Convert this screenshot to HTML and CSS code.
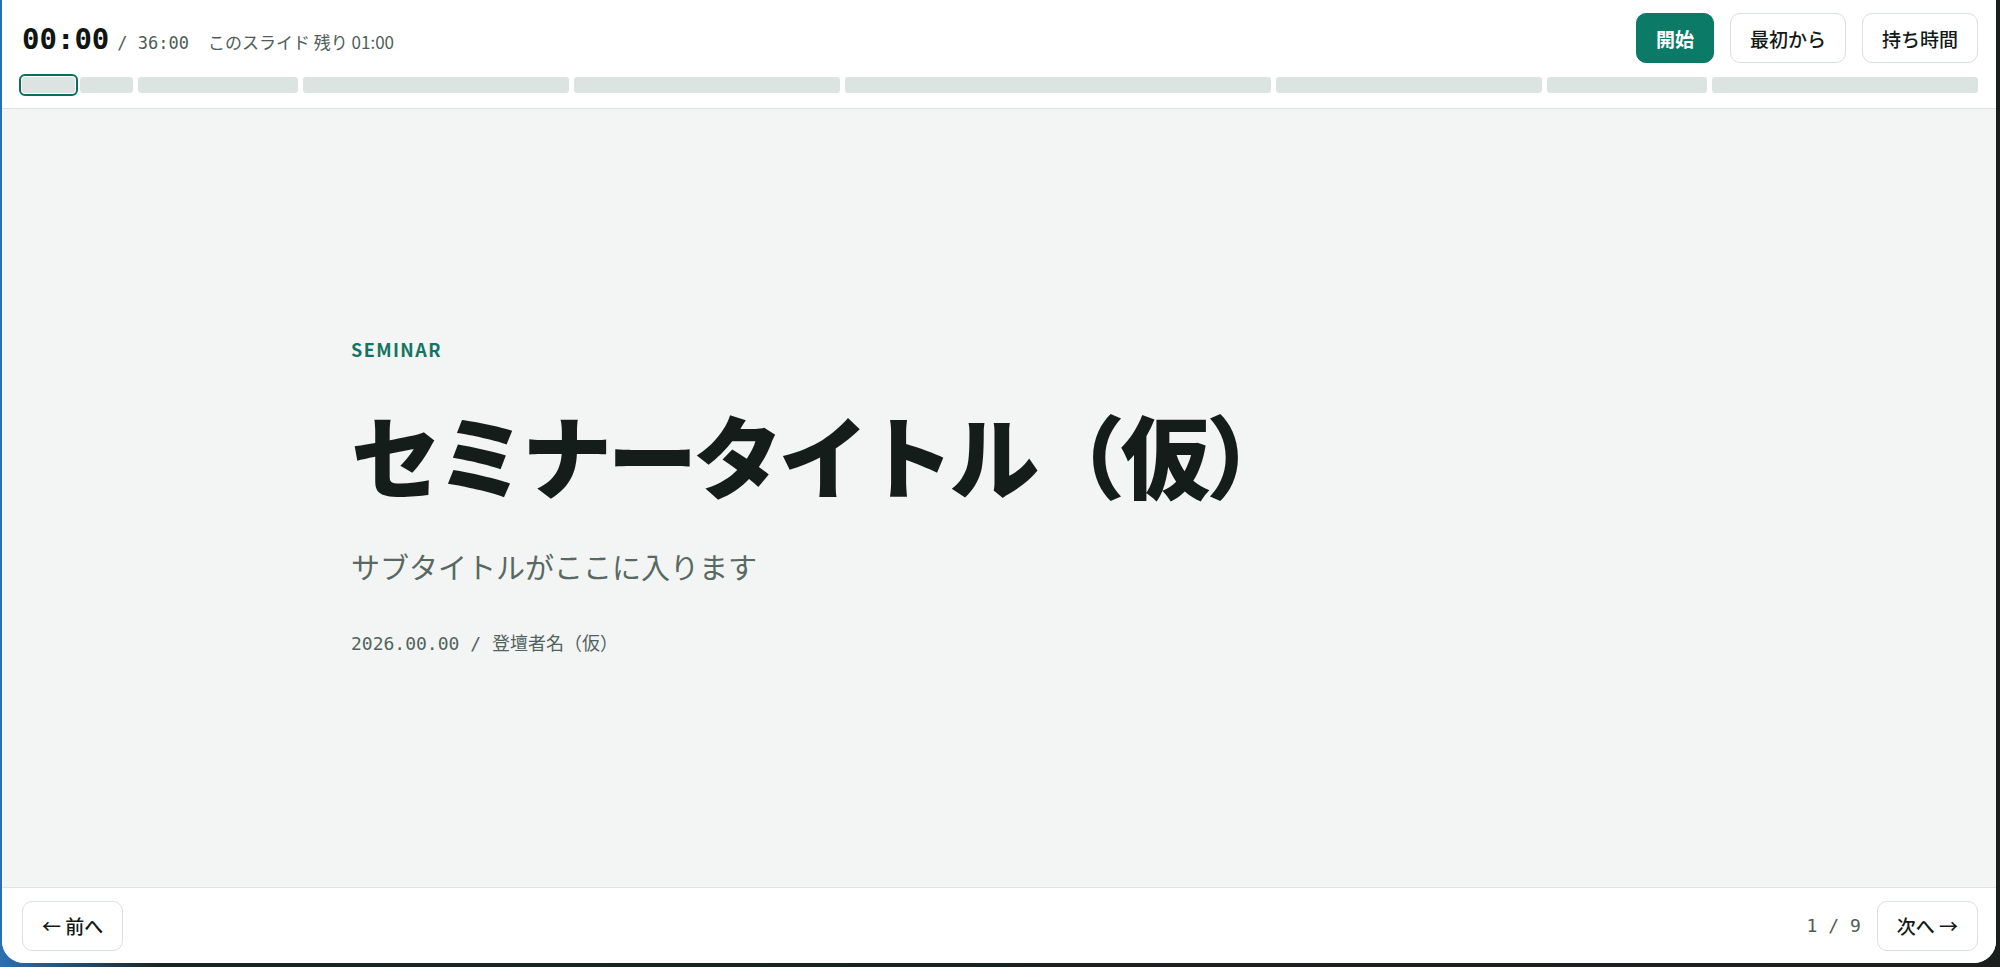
FILE: index.html
```html
<!DOCTYPE html>
<html lang="ja">
<head>
<meta charset="utf-8">
<title>セミナータイトル（仮）</title>
<link rel="stylesheet" href="styles.css">
</head>
<body>
<div class="window">
  <header class="topbar">
    <div class="top-row">
      <div class="timer">
        <span class="elapsed">00:00</span>
        <span class="total">/ 36:00</span>
        <span class="remain">このスライド 残り 01:00</span>
      </div>
      <div class="actions">
        <button class="btn btn-primary">開始</button>
        <button class="btn">最初から</button>
        <button class="btn">持ち時間</button>
      </div>
    </div>
    <div class="progress">
      <span class="seg active" style="flex-grow:1"></span>
      <span class="seg" style="flex-grow:1"></span>
      <span class="seg" style="flex-grow:3"></span>
      <span class="seg" style="flex-grow:5"></span>
      <span class="seg" style="flex-grow:5"></span>
      <span class="seg" style="flex-grow:8"></span>
      <span class="seg" style="flex-grow:5"></span>
      <span class="seg" style="flex-grow:3"></span>
      <span class="seg" style="flex-grow:5"></span>
    </div>
  </header>
  <main class="stage">
    <section class="slide">
      <div class="eyebrow">SEMINAR</div>
      <h1 class="title">セミナータイトル（仮）</h1>
      <p class="subtitle">サブタイトルがここに入ります</p>
      <p class="meta">2026.00.00 / 登壇者名（仮）</p>
    </section>
  </main>
  <footer class="bottombar">
    <button class="btn">← 前へ</button>
    <div class="pager">
      <span class="count">1 / 9</span>
      <button class="btn">次へ →</button>
    </div>
  </footer>
</div>
</body>
</html>
```

FILE: styles.css
```css
html, body {
  margin: 0;
  padding: 0;
  height: 100%;
}
body {
  background: linear-gradient(90deg, #2b6fb0 0%, #1b2422 8%, #1a1f1e 100%);
  font-family: "Noto Sans CJK JP", "Noto Sans", sans-serif;
  color: #17201d;
  overflow: hidden;
}
.window {
  margin: 0 4px 0 2px;
  height: 963px;
  background: #ffffff;
  border-radius: 0 0 22px 22px;
  display: flex;
  flex-direction: column;
  overflow: hidden;
}
.topbar {
  background: #ffffff;
  border-bottom: 1px solid #dde3e0;
  padding: 13px 18px 15px 18px;
  display: flex;
  flex-direction: column;
  gap: 14px;
}
.top-row {
  display: flex;
  align-items: center;
  justify-content: space-between;
  height: 50px;
}
.timer {
  display: flex;
  align-items: baseline;
  padding-top: 2px;
}
.elapsed {
  font-family: "DejaVu Sans Mono", monospace;
  font-weight: 700;
  font-size: 29px;
  color: #0f1513;
  margin-left: 2px;
}
.total {
  font-family: "DejaVu Sans Mono", monospace;
  font-size: 17px;
  color: #4f5d59;
  margin-left: 8px;
}
.remain {
  font-size: 17px;
  color: #4f5d59;
  margin-left: 19px;
}
.actions {
  display: flex;
  gap: 16px;
}
.btn {
  height: 50px;
  padding: 0 19px;
  border: 1px solid #d9e0dd;
  border-radius: 10px;
  background: #ffffff;
  font-family: "Noto Sans CJK JP", "Noto Sans", sans-serif;
  font-size: 19px;
  font-weight: 500;
  color: #121a17;
  cursor: pointer;
}
.btn-primary {
  background: #0b7a67;
  border-color: #0b7a67;
  color: #ffffff;
  font-weight: 700;
}
.progress {
  display: flex;
  gap: 5px;
  margin-left: 2px;
  height: 16px;
}
.seg {
  flex-basis: 0;
  background: #dce4e1;
  border-radius: 3px;
}
.seg.active {
  outline: 2px solid #0b6e5d;
  outline-offset: 1px;
  border-radius: 3px;
}
.stage {
  flex: 1;
  background: #f3f5f4;
  display: flex;
  align-items: center;
}
.slide {
  padding-left: 349px;
}
.eyebrow {
  font-size: 18px;
  font-weight: 700;
  letter-spacing: 0.08em;
  color: #137462;
  line-height: 1;
}
.title {
  margin: 41px 0 0 0;
  font-size: 90px;
  font-weight: 900;
  letter-spacing: -0.05em;
  line-height: 1.2;
  color: #141d1a;
}
.subtitle {
  margin: 39px 0 0 0;
  font-size: 29px;
  font-weight: 400;
  color: #586963;
  line-height: 1.4;
}
.meta {
  margin: 45px 0 0 0;
  font-family: "DejaVu Sans Mono", "Noto Sans CJK JP", monospace;
  font-size: 18px;
  color: #52625d;
  line-height: 1.4;
}
.bottombar {
  background: #ffffff;
  border-top: 1px solid #dde3e0;
  height: 75px;
  padding: 0 18px 0 20px;
  display: flex;
  align-items: center;
  justify-content: space-between;
}
.pager {
  display: flex;
  align-items: center;
  gap: 16px;
}
.count {
  font-family: "DejaVu Sans Mono", monospace;
  font-size: 18px;
  color: #4f5d59;
}
```
